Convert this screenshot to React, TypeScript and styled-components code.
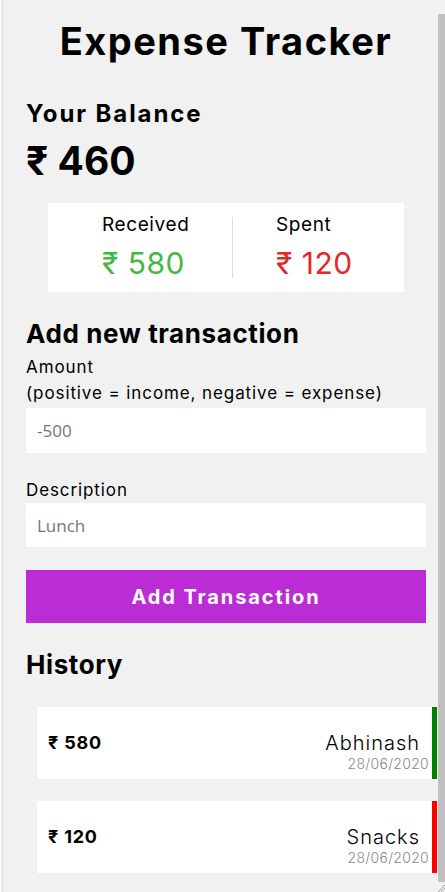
import React from "react";
import styled, { createGlobalStyle } from "styled-components";

const GlobalStyle = createGlobalStyle`
  html, body { margin: 0; padding: 0; height: 100%; }
  body {
    background: #f8f8f8;
    font-family: Inter, "Noto Sans", "DejaVu Sans", sans-serif;
    color: #000;
  }
  * { box-sizing: border-box; }
`;

const Page = styled.div`
  display: flex;
  height: 100vh;
  margin-left: 2px;
  border-left: 1px solid #e0e0e0;
  background: #f1f1f1;
  overflow: hidden;
`;

const Main = styled.main`
  flex: 1;
  min-width: 0;
  padding: 0 12px 0 23px;
`;

const Rail = styled.div`
  width: 7px;
  display: flex;
  flex-direction: column;
  background: #f1f1f1;
`;

const Thumb = styled.div`
  flex: 1;
  margin-top: 14px;
  background: #c1c1c1;
`;

const Grip = styled.svg`
  display: block;
  width: 7px;
  height: 10px;
`;

const Title = styled.h1`
  margin: 18px 0 0;
  font-size: 38px;
  line-height: 46px;
  font-weight: 700;
  letter-spacing: 1.5px;
  text-align: center;
`;

const BalanceLabel = styled.h4`
  margin: 35px 0 0;
  font-size: 24px;
  line-height: 30px;
  font-weight: 700;
  letter-spacing: 1.9px;
`;

const BalanceValue = styled.h1`
  margin: 8px 0 0;
  font-size: 39px;
  line-height: 48px;
  font-weight: 700;
`;

const Summary = styled.div`
  margin: 18px 22px 0;
  height: 89px;
  background: #fff;
  display: grid;
  grid-template-columns: 184px 1px 1fr;
`;

const SummaryCol = styled.div<{ $inset: number }>`
  padding: 10px 0 0 ${(p) => p.$inset}px;
`;

const Divider = styled.div`
  background: #dddddd;
  margin: 14px 0;
`;

const SummaryLabel = styled.div`
  font-size: 19px;
  line-height: 24px;
  letter-spacing: 0.6px;
`;

const SummaryValue = styled.div<{ $color: string }>`
  margin-top: 8px;
  font-size: 30px;
  line-height: 36px;
  letter-spacing: 0.5px;
  color: ${(p) => p.$color};
`;

const SectionTitle = styled.h3<{ $mt: number }>`
  margin: ${(p) => p.$mt}px 0 0;
  font-size: 26px;
  line-height: 32px;
  font-weight: 700;
  letter-spacing: 0.6px;
`;

const FieldLabel = styled.label<{ $mt: number }>`
  display: block;
  margin-top: ${(p) => p.$mt}px;
  font-size: 17px;
  line-height: 26px;
  letter-spacing: 0.9px;
`;

const Input = styled.input<{ $h: number; $mt: number }>`
  display: block;
  width: 100%;
  height: ${(p) => p.$h}px;
  margin-top: ${(p) => p.$mt}px;
  padding: 0 11px;
  border: none;
  background: #fff;
  font-family: "Open Sans", sans-serif;
  font-size: 17px;
  outline: none;
  &::placeholder { color: #757575; }
`;

const Button = styled.button`
  display: block;
  width: 100%;
  height: 53px;
  margin-top: 23px;
  border: none;
  background: #bc2cd6;
  color: #fff;
  font-family: inherit;
  font-size: 20px;
  font-weight: 700;
  letter-spacing: 1.9px;
`;

const List = styled.ul`
  list-style: none;
  margin: 26px -11px 0 11px;
  padding: 0;
  display: flex;
  flex-direction: column;
  gap: 22px;
`;

const Item = styled.li<{ $color: string }>`
  height: 72px;
  background: #fff;
  border-right: 5px solid ${(p) => p.$color};
  display: flex;
  justify-content: space-between;
  align-items: flex-start;
  padding: 24px 3px 0 11px;
`;

const ItemAmount = styled.span`
  font-size: 18px;
  line-height: 24px;
  font-weight: 700;
  letter-spacing: 0.8px;
`;

const Meta = styled.div`
  display: flex;
  flex-direction: column;
  align-items: flex-end;
`;

const Name = styled.span`
  margin-right: 9px;
  font-size: 20px;
  line-height: 24px;
  font-weight: 300;
  letter-spacing: 1px;
`;

const DateText = styled.span`
  font-size: 14px;
  line-height: 18px;
  font-weight: 300;
  letter-spacing: 0.3px;
  color: #888;
`;

const history = [
  { amount: "₹ 580", name: "Abhinash", date: "28/06/2020", color: "green" },
  { amount: "₹ 120", name: "Snacks", date: "28/06/2020", color: "red" },
];

export default function App() {
  return (
    <>
      <GlobalStyle />
      <Page>
        <Main>
          <Title>Expense Tracker</Title>
          <BalanceLabel>Your Balance</BalanceLabel>
          <BalanceValue>₹ 460</BalanceValue>
          <Summary>
            <SummaryCol $inset={54}>
              <SummaryLabel>Received</SummaryLabel>
              <SummaryValue $color="#43b843">₹ 580</SummaryValue>
            </SummaryCol>
            <Divider />
            <SummaryCol $inset={43}>
              <SummaryLabel>Spent</SummaryLabel>
              <SummaryValue $color="#e02a2a">₹ 120</SummaryValue>
            </SummaryCol>
          </Summary>
          <SectionTitle $mt={26}>Add new transaction</SectionTitle>
          <FieldLabel $mt={4}>
            Amount
            <br />
            (positive = income, negative = expense)
          </FieldLabel>
          <Input $h={45} $mt={2} type="text" placeholder="-500" />
          <FieldLabel $mt={24}>Description</FieldLabel>
          <Input $h={44} $mt={0} type="text" placeholder="Lunch" />
          <Button>Add Transaction</Button>
          <SectionTitle $mt={26}>History</SectionTitle>
          <List>
            {history.map((h) => (
              <Item key={h.name} $color={h.color}>
                <ItemAmount>{h.amount}</ItemAmount>
                <Meta>
                  <Name>{h.name}</Name>
                  <DateText>{h.date}</DateText>
                </Meta>
              </Item>
            ))}
          </List>
        </Main>
        <Rail>
          <Thumb />
          <Grip viewBox="0 0 7 10">
            <path d="M7 3 L0 10 M7 6 L3 10" stroke="#a0a0a0" strokeWidth="1" />
          </Grip>
        </Rail>
      </Page>
    </>
  );
}
